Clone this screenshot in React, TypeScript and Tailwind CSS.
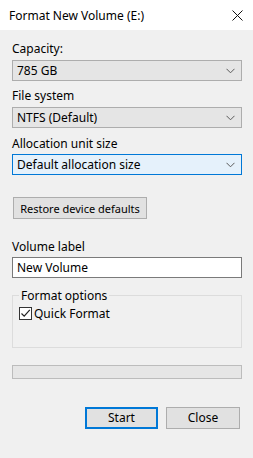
import { ReactNode } from 'react'

const font = { fontFamily: '"Noto Sans", "Open Sans", sans-serif' }

function Chevron() {
    return (
        <svg width="9" height="6" viewBox="0 0 9 6" className="shrink-0">
            <path d="M0.5 0.8 L4.5 4.8 L8.5 0.8" fill="none" stroke="#5a5a5a" strokeWidth="1" />
        </svg>
    )
}

function Select({ value, focused }: { value: string; focused?: boolean }) {
    return (
        <div
            className={
                focused
                    ? 'flex items-center justify-between h-[21px] pl-[4px] pr-[6px] border border-[#0078d7] bg-[#e5f1fb]'
                    : 'flex items-center justify-between h-[21px] pl-[4px] pr-[6px] border border-[#adadad] bg-[#e5e5e5]'
            }
        >
            <span className="leading-none">{value}</span>
            <Chevron />
        </div>
    )
}

function Label({ children, className }: { children: ReactNode; className: string }) {
    return <div className={'h-[15px] leading-[15px] ' + className}>{children}</div>
}

export default function App() {
    return (
        <div style={font} className="w-[253px] h-[458px] bg-[#f0f0f0] text-[12px] text-black flex flex-col overflow-hidden">
            {/* title bar */}
            <div className="h-[30px] bg-white flex items-center justify-between pl-[9px] pr-[10px] shrink-0">
                <span className="text-[12px] mt-[1px]">Format New Volume (E:)</span>
                <svg width="11" height="11" viewBox="0 0 11 11">
                    <path d="M0.5 0.5 L10.5 10.5 M10.5 0.5 L0.5 10.5" stroke="#111" strokeWidth="1" />
                </svg>
            </div>

            <div className="flex flex-col pl-[12px] pr-[11px]">
                <Label className="mt-[11px] mb-[4px]">Capacity:</Label>
                <Select value="785 GB" />

                <Label className="mt-[7px] mb-[4px]">File system</Label>
                <Select value="NTFS (Default)" />

                <Label className="mt-[8px] mb-[3px]">Allocation unit size</Label>
                <Select value="Default allocation size" focused />

                <button className="mt-[22px] ml-[1px] w-[134px] h-[22px] px-0 border border-[#adadad] bg-[#e1e1e1] text-[11px] leading-none whitespace-nowrap">
                    Restore device defaults
                </button>

                <Label className="mt-[20px] mb-[3px]">Volume label</Label>
                <div className="h-[21px] border border-[#7a7a7a] bg-white flex items-center pl-[4px]">
                    <span className="leading-none">New Volume</span>
                </div>

                {/* group box */}
                <fieldset className="mt-[10px] h-[60px] border border-[#dcdcdc] rounded-none px-[6px] pt-0 pb-0 m-0">
                    <legend className="px-[2px] leading-[15px]">Format options</legend>
                    <label className="flex items-center gap-[2px] mt-[3px]">
                        <span className="w-[13px] h-[13px] border border-[#333] bg-white flex items-center justify-center">
                            <svg width="11" height="11" viewBox="0 0 11 11">
                                <path d="M1.5 5.5 L4.2 8.2 L9.8 1.8" fill="none" stroke="#222" strokeWidth="1.2" />
                            </svg>
                        </span>
                        <span className="leading-[15px]">Quick Format</span>
                    </label>
                </fieldset>

                {/* progress bar */}
                <div className="mt-[17px] h-[14px] border border-[#bcbcbc] bg-[#e6e6e6]" />

                <div className="mt-[28px] flex justify-end gap-[8px] pr-[2px]">
                    <button className="w-[73px] h-[22px] border-2 border-[#0078d7] bg-[#e1e1e1] text-[12px] leading-none">
                        Start
                    </button>
                    <button className="w-[74px] h-[22px] border border-[#adadad] bg-[#e1e1e1] text-[12px] leading-none">
                        Close
                    </button>
                </div>
            </div>
        </div>
    )
}
